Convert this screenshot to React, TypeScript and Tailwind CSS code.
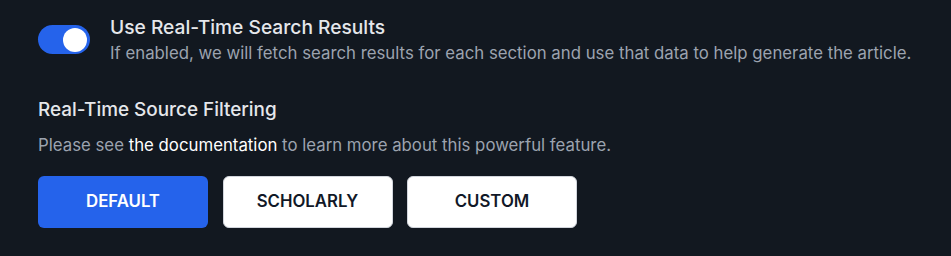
import React, { useState } from "react";

export default function App() {
  const [on, setOn] = useState(true);
  const [sel, setSel] = useState("DEFAULT");
  return (
    <div className="w-[951px] h-[256px] bg-[#121820] pl-[38px] pt-[14px]" style={{ fontFamily: "Inter, 'Noto Sans', sans-serif" }}>
      <div className="flex items-start gap-[20px]">
        <button
          onClick={() => setOn(!on)}
          className={`mt-[11px] w-[52px] h-[29px] rounded-full flex items-center px-[3px] ${on ? "bg-[#2563eb] justify-end" : "bg-gray-600 justify-start"}`}
        >
          <span className="w-[24px] h-[24px] rounded-full bg-white block" />
        </button>
        <div className="flex flex-col">
          <div className="text-[19.2px] leading-[27px] font-medium text-[#e5e7eb]">Use Real-Time Search Results</div>
          <div className="text-[16.8px] leading-[25px] text-[#9ca3af]">
            If enabled, we will fetch search results for each section and use that data to help generate the article.
          </div>
        </div>
      </div>
      <div className="mt-[30px] text-[18.9px] leading-[27px] font-medium text-[#e5e7eb]">Real-Time Source Filtering</div>
      <div className="mt-[10px] text-[16.8px] leading-[25px] text-[#9ca3af]">
        Please see <span className="text-white">the documentation</span> to learn more about this powerful feature.
      </div>
      <div className="mt-[18px] flex gap-[14.5px]">
        {["DEFAULT", "SCHOLARLY", "CUSTOM"].map((l) => (
          <button
            key={l}
            onClick={() => setSel(l)}
            className={`w-[170px] h-[52px] rounded-[6px] text-[16.8px] font-semibold ${sel === l ? "bg-[#2563eb] text-white" : "bg-white text-[#111827] border border-gray-300"}`}
          >
            {l}
          </button>
        ))}
      </div>
    </div>
  );
}
